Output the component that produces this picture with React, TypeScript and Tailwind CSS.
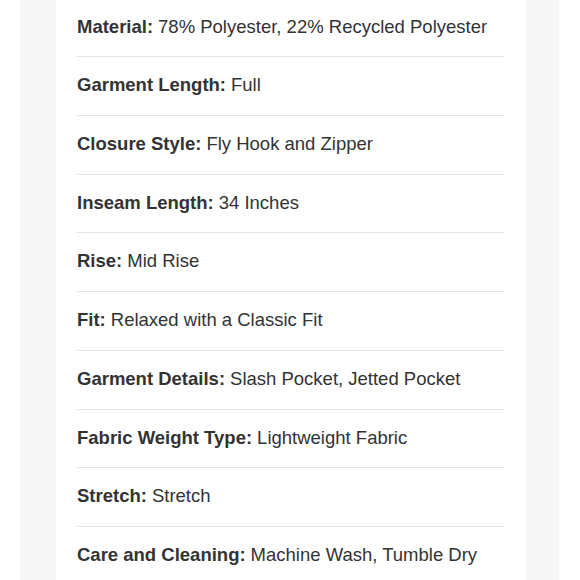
const specs: [string, string][] = [
	["Material:", "78% Polyester, 22% Recycled Polyester"],
	["Garment Length:", "Full"],
	["Closure Style:", "Fly Hook and Zipper"],
	["Inseam Length:", "34 Inches"],
	["Rise:", "Mid Rise"],
	["Fit:", "Relaxed with a Classic Fit"],
	["Garment Details:", "Slash Pocket, Jetted Pocket"],
	["Fabric Weight Type:", "Lightweight Fabric"],
	["Stretch:", "Stretch"],
	["Care and Cleaning:", "Machine Wash, Tumble Dry"],
];

export default function App() {
	return (
		<div
			className="flex h-[580px] w-[580px] overflow-hidden bg-white pl-[20px] pr-[21px]"
			style={{ fontFamily: '"Liberation Sans", Arial, sans-serif' }}
		>
			<div className="flex flex-1 bg-[#f7f7f7] px-[36px] pr-[33px]">
				<div className="flex-1 bg-white px-[21px] pr-[22px]">
					<ul>
						{specs.map(([label, value], i) => (
							<li
								key={label}
								className={
									"flex items-center border-b border-[#e6e6e6] pb-[2px] text-[18.5px] text-[#333333] " +
									(i === 0 ? "h-[57px]" : "h-[58.75px]")
								}
							>
								<span className="font-bold">{label}</span>
								<span className="ml-[5px]">{value}</span>
							</li>
						))}
					</ul>
				</div>
			</div>
		</div>
	);
}
